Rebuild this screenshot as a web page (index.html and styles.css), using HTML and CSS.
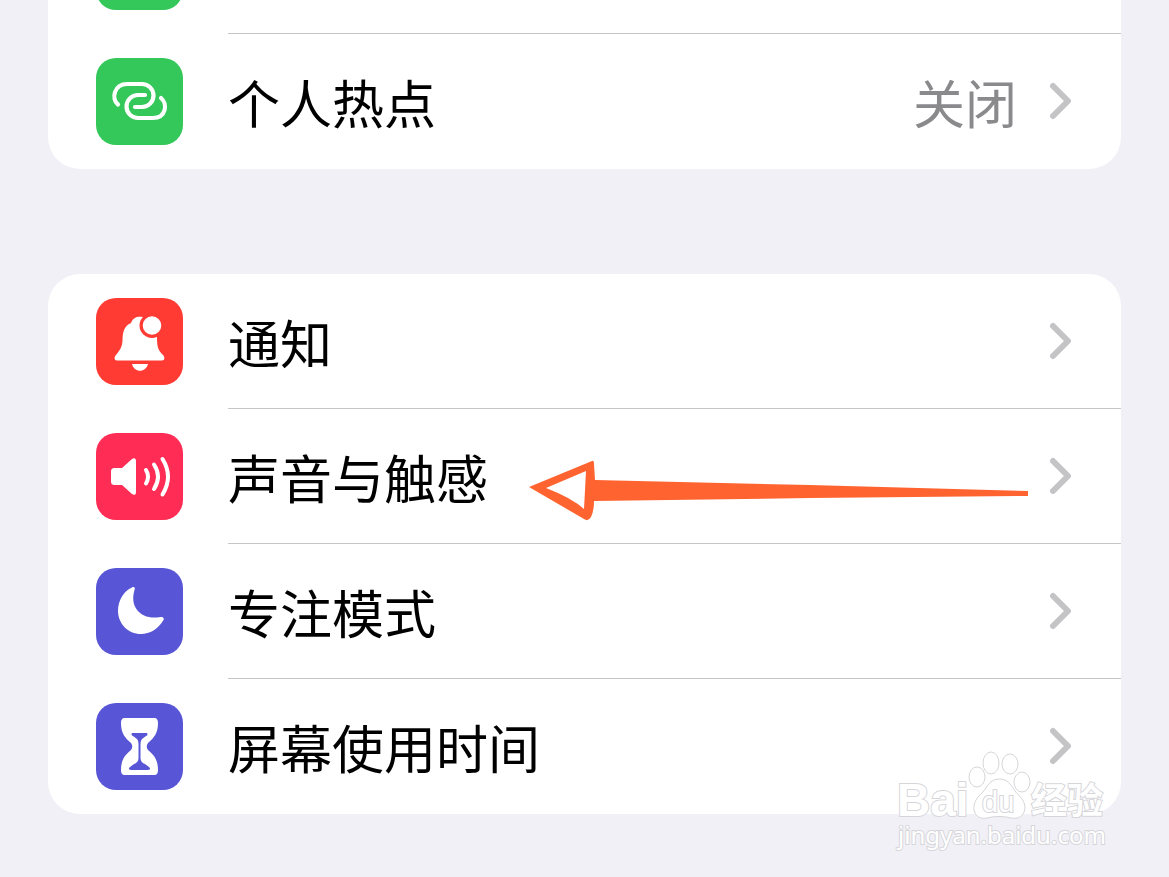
FILE: index.html
```html
<!DOCTYPE html>
<html lang="zh-CN">
<head>
    <meta charset="UTF-8">
    <meta name="viewport" content="width=device-width, initial-scale=1.0">
    <title>设置</title>
    <link rel="stylesheet" href="styles.css">
</head>
<body>
    <main class="settings">
        <!-- Network -->
        <div class="group group-top">
            <div class="row">
                <span class="icon green"></span>
                <span class="row-body"></span>
            </div>
            <a class="row" href="#hotspot">
                <svg class="icon green" viewBox="0 0 87 87" fill="none" stroke="#fff" stroke-width="4.2" stroke-linecap="round" aria-hidden="true">
                    <path d="M22 46.500C15 41 18 26 31 26H46A11.500 11.500 0 0 1 46 49H39"/>
                    <path d="M49 37H42A11.500 11.500 0 0 0 42 60H57C70 60 72 46 65 40"/>
                </svg>
                <span class="row-body">
                    <span class="label">个人热点</span>
                    <span class="value">关闭</span>
                    <svg class="chevron" viewBox="0 0 24 40" aria-hidden="true"><path d="M4 5L19 20L4 35"/></svg>
                </span>
            </a>
        </div>

        <!-- Notifications, sounds, focus -->
        <div class="group">
            <a class="row" href="#notifications">
                <svg class="icon red" viewBox="0 0 87 87" aria-hidden="true">
                    <path fill="#fff" d="M21 62.500C18 62.500 18 59 20 57C24 52 26 49 26.500 43C26.500 34 28 28 35 25C37 19 42 18 47 19L61 39C61 49 62 52 67 57C69 59 69 62.500 66 62.500ZM36 66H52C50 75 38 75 36 66Z"/>
                    <circle cx="56" cy="27.500" r="12.500" fill="#ff3b34"/>
                    <circle cx="56" cy="27.500" r="9.300" fill="#fff"/>
                </svg>
                <span class="row-body">
                    <span class="label">通知</span>
                    <svg class="chevron" viewBox="0 0 24 40" aria-hidden="true"><path d="M4 5L19 20L4 35"/></svg>
                </span>
            </a>
            <a class="row" href="#sounds">
                <svg class="icon pink" viewBox="0 0 87 87" aria-hidden="true">
                    <path fill="#fff" d="M19 35H26L36 26C38 24.500 40 25 40 28V59C40 62 38 62.500 36 61L26 52H19C16 52 15 51 15 48V39C15 36 16 35 19 35Z"/>
                    <path fill="none" stroke="#fff" stroke-width="4" stroke-linecap="round" d="M50 37Q54 43.500 50 50.500M58 31.500Q66 43.500 58 56M66.500 26Q77.500 43.500 66.500 61.500"/>
                </svg>
                <span class="row-body">
                    <span class="label">声音与触感</span>
                    <svg class="chevron" viewBox="0 0 24 40" aria-hidden="true"><path d="M4 5L19 20L4 35"/></svg>
                </span>
                <!-- Pointer arrow -->
                <svg class="arrow" viewBox="0 0 502 62" aria-hidden="true">
                    <path fill="#ff6430" fill-rule="evenodd" d="M1 27L64 1Q66 0 66 4L67 20L282 25L500 31V36L282 38L66 41Q66 51 63 57Q60 62 56 59ZM18 28Q44 38 56 49L58 11Z"/>
                </svg>
            </a>
            <a class="row" href="#focus">
                <svg class="icon indigo" viewBox="0 0 87 87" aria-hidden="true">
                    <path fill="#fff" d="M36 19.500C38 18.500 39.500 19.500 38.500 22C33 40 46 52.500 64.500 49C67 48.500 68.500 50 67.500 52C62 61 54 66 45 66C32 66 22 55.500 22 43C22 32 28 23 36 19.500Z"/>
                </svg>
                <span class="row-body">
                    <span class="label">专注模式</span>
                    <svg class="chevron" viewBox="0 0 24 40" aria-hidden="true"><path d="M4 5L19 20L4 35"/></svg>
                </span>
            </a>
            <a class="row" href="#screen-time">
                <svg class="icon indigo" viewBox="0 0 87 87" aria-hidden="true">
                    <path fill="#fff" d="M29 15H58C61 15 62 17 62 20C62 30 58 35 52 40Q49.500 43.500 52 47C58 52 62 57 62 67C62 70 61 72 58 72H29C26 72 25 70 25 67C25 57 29 52 35 47Q37.500 43.500 35 40C29 35 25 30 25 20C25 17 26 15 29 15Z"/>
                    <path fill="#5856d6" d="M37 30H50C52 30 52 32 50 33L46 36Q44.500 37.500 44.500 41V55C44.500 58 46 60 49 61L53 64C55 66 54 67 52 67H35C33 67 32 66 34 64L38 61C41 60 42.500 58 42.500 55V41Q42.500 37.500 41 36L37 33C35 32 35 30 37 30Z"/>
                </svg>
                <span class="row-body">
                    <span class="label">屏幕使用时间</span>
                    <svg class="chevron" viewBox="0 0 24 40" aria-hidden="true"><path d="M4 5L19 20L4 35"/></svg>
                </span>
            </a>
        </div>

        <!-- Watermark -->
        <svg class="watermark" viewBox="0 0 214 105">
            <ellipse cx="82" cy="27" rx="8" ry="10"/>
            <ellipse cx="96" cy="13" rx="8" ry="11"/>
            <ellipse cx="115" cy="14" rx="8" ry="10"/>
            <ellipse cx="127" cy="32" rx="8" ry="10"/>
            <path d="M104 29C95 29 92 37 88 42C82 47 78 53 79 60C81 68 87 69 92 68C100 66 108 66 116 68C123 69 129 67 130 58C130 50 124 46 120 41C116 35 113 29 104 29Z"/>
            <text class="wm-name" x="2" y="66">Bai</text>
            <text class="wm-du" x="87" y="62">du</text>
            <text class="wm-cn" x="136" y="64">经验</text>
            <text class="wm-url" x="3" y="94">jingyan.baidu.com</text>
        </svg>
    </main>
</body>
</html>
```

FILE: styles.css
```css
body {
    margin: 0;
    background: #f1f0f6;
    color: #000;
    font-family: "Noto Sans CJK SC", sans-serif;
    font-size: 52px;
    line-height: 64px;
}

.settings {
    position: relative;
    min-height: 100vh;
    padding: 0 48px;
    overflow: hidden;
    box-sizing: border-box;
}

.group {
    margin-bottom: 105px;
    background: #fff;
    border-radius: 32px;
    overflow: hidden;
}

/* list is scrolled, the first row is mostly out of view */
.group-top {
    margin-top: -101px;
}

.group:last-of-type {
    margin-bottom: 0;
}

.row {
    position: relative;
    display: flex;
    align-items: center;
    gap: 45px;
    height: 135px;
    padding-left: 48px;
    color: inherit;
    text-decoration: none;
}

.icon {
    flex: none;
    width: 87px;
    height: 87px;
    border-radius: 20px;
}

.green {
    background: #34c759;
}

.red {
    background: #ff3b34;
}

.pink {
    background: #ff2d55;
}

.indigo {
    background: #5856d6;
}

.row-body {
    flex: 1;
    display: flex;
    align-items: center;
    height: 100%;
    padding-right: 48px;
    border-bottom: 1px solid #c6c6c8;
    box-sizing: border-box;
}

.row:last-child .row-body {
    border-bottom-color: transparent;
}

.label,
.value {
    padding-top: 2px;
}

.label {
    flex: 1;
}

.value {
    margin-right: 32px;
    color: #8a8a8d;
}

.chevron {
    width: 24px;
    height: 40px;
    fill: none;
    stroke: #c4c4c6;
    stroke-width: 6;
    stroke-linecap: round;
    stroke-linejoin: round;
}

.arrow {
    position: absolute;
    top: 51px;
    left: 480px;
    width: 502px;
    height: 62px;
}

.watermark {
    position: absolute;
    right: 60px;
    bottom: 22px;
    width: 214px;
    height: 105px;
    fill: #fff;
    stroke: #d6d6da;
    stroke-width: 1;
}

.watermark text {
    paint-order: stroke;
    stroke-width: 2;
}

.wm-name {
    font: bold 46px "Liberation Sans", sans-serif;
}

.wm-du {
    font: 29px "Liberation Sans", sans-serif;
}

.wm-cn {
    font: bold 36px "Noto Sans CJK SC", sans-serif;
}

.wm-url {
    font: 24px "Noto Sans", sans-serif;
}
```
